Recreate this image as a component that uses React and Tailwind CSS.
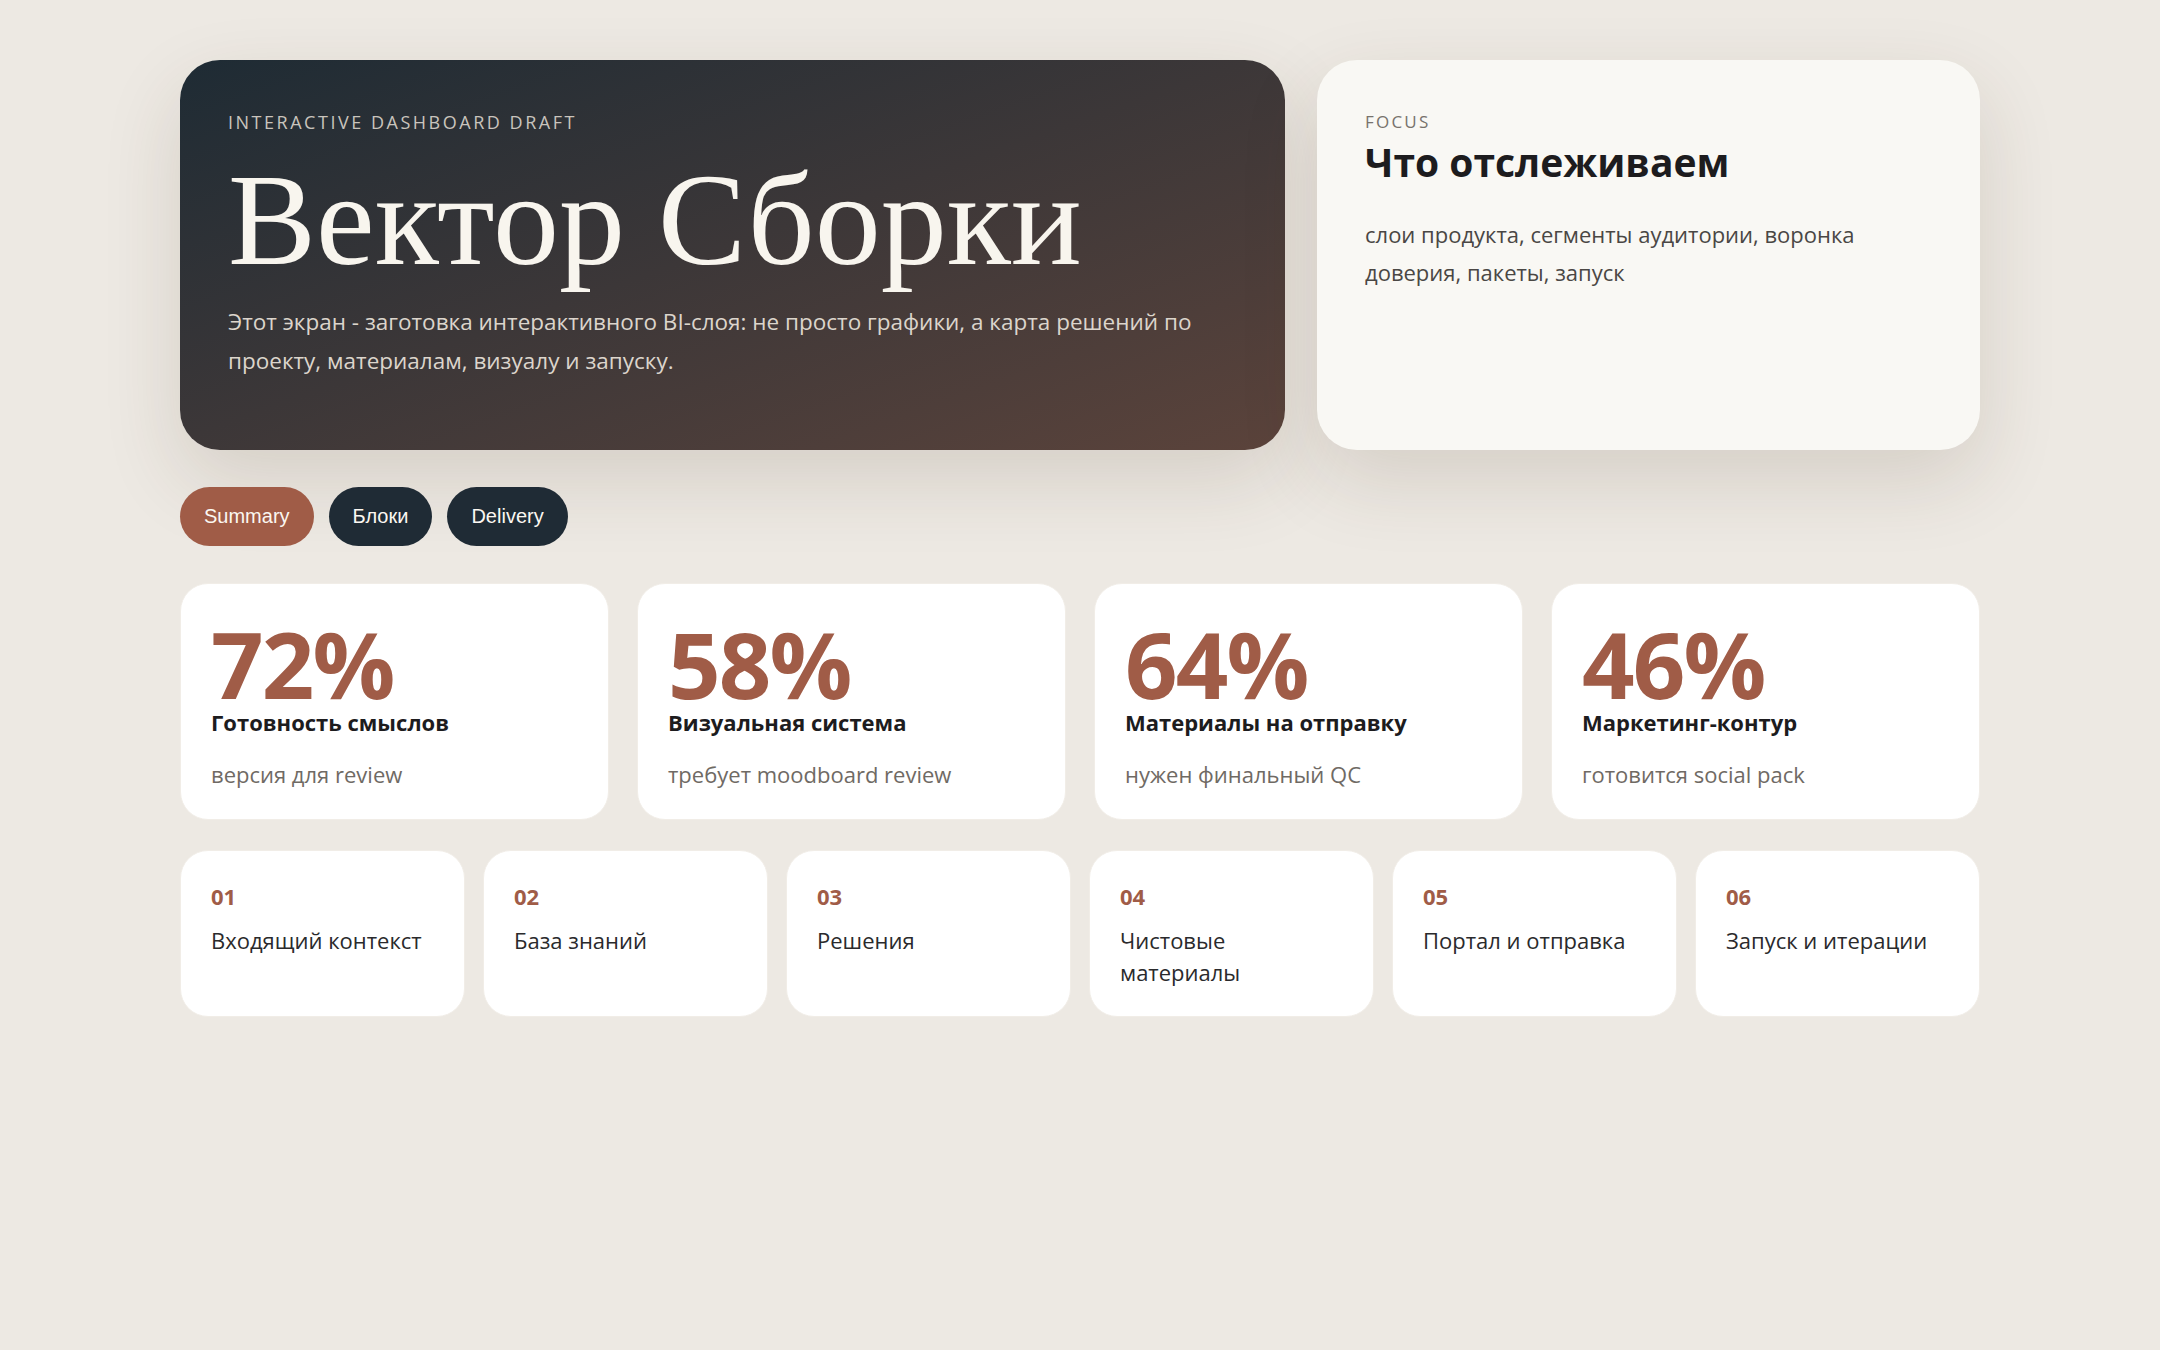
import React from "react";

const stats = [
  { v: "72%", t: "Готовность смыслов", s: "версия для review" },
  { v: "58%", t: "Визуальная система", s: "требует moodboard review" },
  { v: "64%", t: "Материалы на отправку", s: "нужен финальный QC" },
  { v: "46%", t: "Маркетинг-контур", s: "готовится social pack" },
];

const steps = [
  ["01", "Входящий контекст"],
  ["02", "База знаний"],
  ["03", "Решения"],
  ["04", "Чистовые материалы"],
  ["05", "Портал и отправка"],
  ["06", "Запуск и итерации"],
];

export default function App() {
  return (
    <div
      className="min-h-[1350px] w-full bg-[#ede9e3] text-[#1d1d1f]"
      style={{ fontFamily: '"Open Sans", "Noto Sans", sans-serif' }}
    >
      <div className="mx-auto w-[1800px] pt-[60px]">
        <div className="grid grid-cols-[5fr_3fr] gap-[32px]">
          <div className="h-[390px] rounded-[40px] bg-gradient-to-br from-[#1e2b34] to-[#5b433b] px-[48px] pt-[51px] shadow-[0_30px_80px_rgba(70,50,30,0.14)]">
            <div className="text-[18px] uppercase leading-[22px] tracking-[0.14em] text-[#c9c4bd]">
              Interactive dashboard draft
            </div>
            <h1
              className="mt-[18px] text-[132px] font-normal leading-[1.05] text-[#f8f5ee]"
              style={{ fontFamily: '"Liberation Serif", "DejaVu Serif", serif' }}
            >
              Вектор Сборки
            </h1>
            <p className="mt-[12px] max-w-[1020px] text-[22.5px] leading-[39px] text-[#dcd5cc]">
              Этот экран - заготовка интерактивного BI-слоя: не просто графики, а карта решений по проекту, материалам, визуалу и запуску.
            </p>
          </div>
          <div className="h-[390px] rounded-[40px] bg-[#f9f8f4] px-[48px] pt-[51px] shadow-[0_30px_80px_rgba(70,50,30,0.14)]">
            <div className="text-[17px] uppercase leading-[22px] tracking-[0.13em] text-[#77726c]">
              Focus
            </div>
            <h2 className="mt-[2px] text-[39px] font-bold leading-[54px] text-[#1d1c1e]">
              Что отслеживаем
            </h2>
            <p className="mt-[26px] max-w-[520px] text-[22px] leading-[38px] text-[#4a4744]">
              слои продукта, сегменты аудитории, воронка доверия, пакеты, запуск
            </p>
          </div>
        </div>

        <div
          className="mt-[37px] flex gap-[15px]"
          style={{ fontFamily: '"Liberation Sans", Arial, sans-serif' }}
        >
          <button className="rounded-full bg-[#a05c47] px-[24px] py-[18px] text-[20px] leading-[23px] text-[#fbf7f1]">
            Summary
          </button>
          <button className="rounded-full bg-[#1f2b35] px-[24px] py-[18px] text-[20px] leading-[23px] text-[#fbf7f1]">
            Блоки
          </button>
          <button className="rounded-full bg-[#1f2b35] px-[24px] py-[18px] text-[20px] leading-[23px] text-[#fbf7f1]">
            Delivery
          </button>
        </div>

        <div className="mt-[37px] grid grid-cols-4 gap-[28px]">
          {stats.map((c) => (
            <div
              key={c.v}
              className="h-[237px] rounded-[28px] border border-[#f1ede7] bg-white px-[30px] pt-[38px]"
            >
              <div className="text-[92px] font-bold leading-[84px] tracking-[-0.02em] text-[#a05c47]">
                {c.v}
              </div>
              <div className="mt-[1px] text-[22px] font-bold leading-[30px] text-[#1d1c1e]">
                {c.t}
              </div>
              <div className="mt-[22px] text-[22px] leading-[30px] text-[#6f6a64]">
                {c.s}
              </div>
            </div>
          ))}
        </div>

        <div className="mt-[30px] grid grid-cols-6 gap-[18px]">
          {steps.map(([n, t]) => (
            <div
              key={n}
              className="h-[167px] rounded-[28px] border border-[#f1ede7] bg-white px-[30px] pt-[29px]"
            >
              <div className="text-[22px] font-bold leading-[32px] text-[#a05c47]">{n}</div>
              <div className="mt-[12px] text-[22px] leading-[32px] text-[#2a2a2c]">{t}</div>
            </div>
          ))}
        </div>
      </div>
    </div>
  );
}
